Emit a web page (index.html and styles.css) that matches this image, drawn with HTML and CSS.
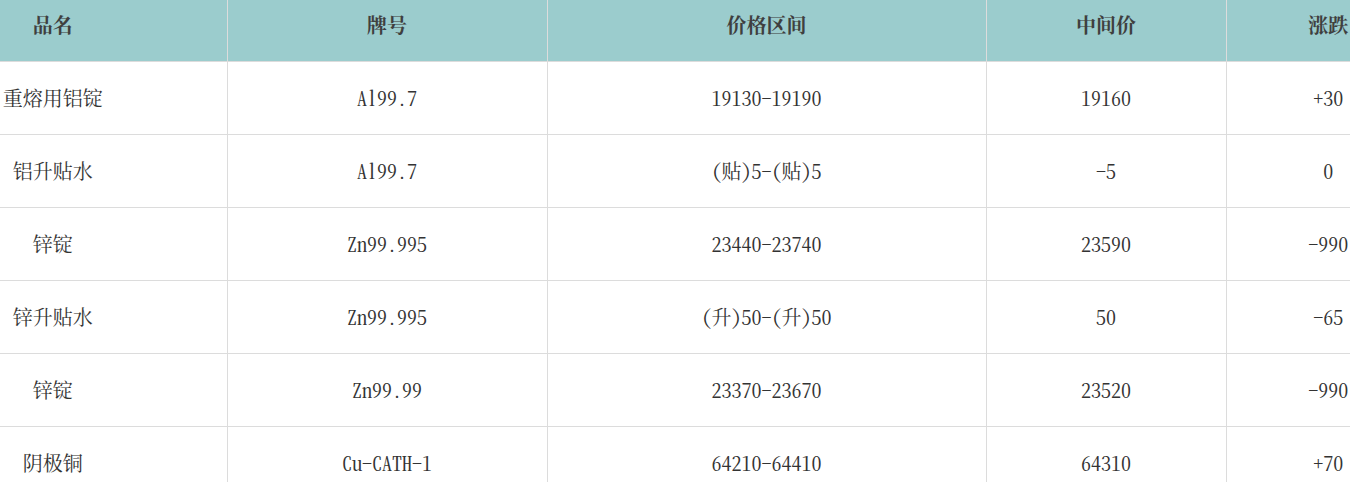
FILE: index.html
```html
<!DOCTYPE html>
<html lang="zh-CN">
<head>
<meta charset="utf-8">
<link rel="stylesheet" href="styles.css">
</head>
<body>
<div class="wrap">
<table class="price">
  <colgroup>
    <col class="c1"><col class="c2"><col class="c3"><col class="c4"><col class="c5">
  </colgroup>
  <thead>
    <tr><th class="name">品名</th><th>牌号</th><th>价格区间</th><th>中间价</th><th>涨跌</th></tr>
  </thead>
  <tbody>
    <tr><td class="name">重熔用铝锭</td><td>Al99.7</td><td>19130-19190</td><td>19160</td><td>+30</td></tr>
    <tr><td class="name">铝升贴水</td><td>Al99.7</td><td>(贴)5-(贴)5</td><td>-5</td><td>0</td></tr>
    <tr><td class="name">锌锭</td><td>Zn99.995</td><td>23440-23740</td><td>23590</td><td>-990</td></tr>
    <tr><td class="name">锌升贴水</td><td>Zn99.995</td><td>(升)50-(升)50</td><td>50</td><td>-65</td></tr>
    <tr><td class="name">锌锭</td><td>Zn99.99</td><td>23370-23670</td><td>23520</td><td>-990</td></tr>
    <tr><td class="name">阴极铜</td><td>Cu-CATH-1</td><td>64210-64410</td><td>64310</td><td>+70</td></tr>
  </tbody>
</table>
</div>
</body>
</html>
```
FILE: styles.css
```css
html, body {
  margin: 0;
  padding: 0;
  background: #fff;
}
.wrap {
  width: 1350px;
  height: 482px;
  overflow: hidden;
}
.price {
  width: 1430px;
  border-collapse: collapse;
  table-layout: fixed;
  font-family: "Noto Serif CJK SC", "Liberation Serif", "Noto Sans CJK SC", serif;
  font-feature-settings: "hwid" 1;
  font-size: 20px;
  color: #333;
}
.c1 { width: 227px; }
.c2 { width: 320px; }
.c3 { width: 439px; }
.c4 { width: 240px; }
.c5 { width: 204px; }
.price th {
  background: #9bcccd;
  color: #3f3f3f;
  font-weight: bold;
  height: 61px;
  padding: 0 0 11px 0;
  box-sizing: border-box;
  text-align: center;
  vertical-align: middle;
  border-left: 1px solid #dcdcdc;
  border-bottom: 1px solid #dcdcdc;
}
.price td {
  height: 73px;
  padding: 0;
  box-sizing: border-box;
  text-align: center;
  vertical-align: middle;
  border-left: 1px solid #dcdcdc;
  border-bottom: 1px solid #dcdcdc;
  white-space: nowrap;
}
.price .name {
  border-left: none;
  padding-right: 121px;
}
```
